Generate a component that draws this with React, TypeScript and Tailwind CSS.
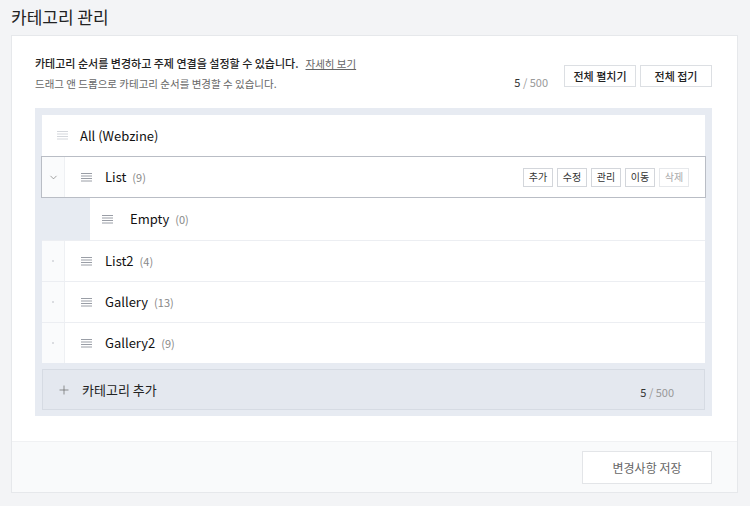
import { Plus, ChevronDown } from "lucide-react"

type Row = {
    name: string
    count?: number
    depth: number
    lead: "none" | "dot" | "chevron"
    selected?: boolean
}

const rows: Row[] = [
    { name: "All (Webzine)", depth: 0, lead: "none" },
    { name: "List", count: 9, depth: 0, lead: "chevron", selected: true },
    { name: "Empty", count: 0, depth: 1, lead: "none" },
    { name: "List2", count: 4, depth: 0, lead: "dot" },
    { name: "Gallery", count: 13, depth: 0, lead: "dot" },
    { name: "Gallery2", count: 9, depth: 0, lead: "dot" },
]

const actions = ["추가", "수정", "관리", "이동", "삭제"]

function Handle({ light }: { light?: boolean }) {
    return (
        <svg width="11" height="9" viewBox="0 0 11 9" className="shrink-0">
            {[0.5, 3, 5.5, 8].map((y) => (
                <line key={y} x1="0" x2="11" y1={y} y2={y} stroke={light ? "#d4d7dc" : "#9a9ea6"} strokeWidth="1" />
            ))}
        </svg>
    )
}

function Count() {
    return (
        <span className="text-[11px]">
            <span className="text-[#333]">5</span>
            <span className="text-[#999]"> / 500</span>
        </span>
    )
}

function TreeRow({ row, first }: { row: Row; first: boolean }) {
    const border = first ? "" : row.selected ? "" : "border-t border-[#eceef2]"

    // first row has no lead column, handle sits closer to the edge
    if (row.lead === "none" && row.depth === 0) {
        return (
            <div className={`flex items-center h-[41px] bg-white pl-[15px] ${border}`}>
                <Handle light />
                <span className="ml-[12px] text-[13px] text-[#111]">{row.name}</span>
            </div>
        )
    }

    if (row.depth === 1) {
        return (
            <div className="flex h-[42px]">
                <div className="w-[48px] bg-[#e7ebf2]" />
                <div className="flex grow items-center bg-white pl-[12px]">
                    <Handle />
                    <span className="ml-[17px] text-[13px] text-[#111]">{row.name}</span>
                    <span className="ml-[6px] text-[11px] text-[#888]">({row.count})</span>
                </div>
            </div>
        )
    }

    return (
        <div
            className={`flex items-stretch bg-white ${
                row.selected ? "-mx-px h-[42px] border border-[#b9bdc5]" : `h-[41px] ${border}`
            }`}
        >
            <div className="flex w-[23px] items-center justify-center border-r border-[#eef0f3] bg-[#fafbfc]">
                {row.lead === "chevron" ? (
                    <ChevronDown size={11} strokeWidth={1.5} className="text-[#777]" />
                ) : (
                    <span className="block h-[2px] w-[2px] rounded-full bg-[#d0d3d8]" />
                )}
            </div>
            <div className="flex grow items-center pl-[16px] pr-[16px]">
                <Handle />
                <span className="ml-[13px] text-[13px] text-[#111]">{row.name}</span>
                <span className="ml-[6px] text-[11px] text-[#888]">({row.count})</span>
                {row.selected && (
                    <div className="ml-auto flex gap-[4px]">
                        {actions.map((a) => (
                            <button
                                key={a}
                                className={`h-[19px] w-[30px] border bg-white text-[10px] leading-none ${
                                    a === "삭제" ? "border-[#e6e8eb] text-[#aaa]" : "border-[#d3d6db] text-[#333]"
                                }`}
                            >
                                {a}
                            </button>
                        ))}
                    </div>
                )}
            </div>
        </div>
    )
}

export default function App() {
    return (
        <div
            className="w-[750px] h-[506px] bg-[#f3f4f6] px-[11px] pt-[4px] overflow-hidden"
            style={{ fontFamily: '"Noto Sans CJK KR", "Noto Sans", sans-serif' }}
        >
            <h1 className="h-[31px] text-[17px] leading-[26px] text-[#222]">카테고리 관리</h1>

            {/* main card */}
            <div className="w-[727px] border border-[#e6e8eb] bg-white">
                <div className="pl-[23px] pr-[25px] pt-[18px] pb-[25px]">
                    {/* header */}
                    <div className="flex justify-between">
                        <div>
                            <p className="text-[11px] leading-[18px] font-medium text-[#222]">
                                카테고리 순서를 변경하고 주제 연결을 설정할 수 있습니다.
                                <a className="ml-[7px] text-[10.5px] font-normal text-[#666] underline">자세히 보기</a>
                            </p>
                            <p className="mt-[2px] text-[10.5px] leading-[18px] text-[#666]">
                                드래그 앤 드롭으로 카테고리 순서를 변경할 수 있습니다.
                            </p>
                        </div>
                        <div className="flex items-start gap-[4px] pt-[11px]">
                            <span className="mr-[12px] mt-[3px]"><Count /></span>
                            <button className="h-[22px] w-[72px] border border-[#dcdfe3] bg-white text-[11px] font-medium text-[#222]">전체 펼치기</button>
                            <button className="h-[22px] w-[72px] border border-[#dcdfe3] bg-white text-[11px] font-medium text-[#222]">전체 접기</button>
                        </div>
                    </div>

                    {/* tree */}
                    <div className="mt-[15px] bg-[#e7ebf2] p-[7px] pb-[6px]">
                        <div className="flex flex-col">
                            {rows.map((r, i) => (
                                <TreeRow key={r.name} row={r} first={i === 0 || rows[i - 1].selected === true} />
                            ))}
                        </div>
                        <div className="mt-[6px] flex h-[41px] items-center border border-[#d6dbe3] bg-[#e4e8ef] pl-[14px] pr-[30px]">
                            <Plus size={14} strokeWidth={1.2} className="text-[#666]" />
                            <span className="ml-[11px] text-[13px] text-[#222]">카테고리 추가</span>
                            <span className="ml-auto"><Count /></span>
                        </div>
                    </div>
                </div>

                {/* footer */}
                <div className="flex justify-end border-t border-[#f0f1f3] bg-[#f9fafb] pl-[24px] pr-[25px] pt-[9px] pb-[8px]">
                    <button className="h-[33px] w-[130px] border border-[#e3e5e8] bg-white text-[12px] text-[#666]">변경사항 저장</button>
                </div>
            </div>
        </div>
    )
}
